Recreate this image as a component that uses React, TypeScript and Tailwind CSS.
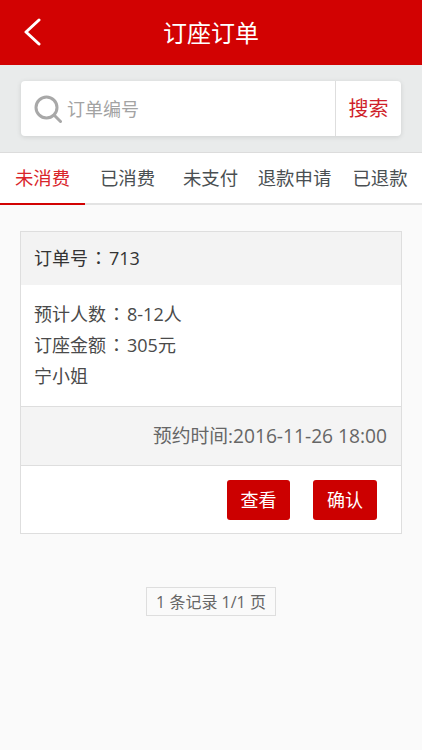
const FONT = "font-['Open_Sans','Noto_Sans_CJK_SC',sans-serif]"

const tabs = [
  { label: '未消费', className: 'w-[85px]', active: true },
  { label: '已消费', className: 'w-[85px]' },
  { label: '未支付', className: 'w-[81px]' },
  { label: '退款申请', className: 'w-[87px]' },
  { label: '已退款', className: 'w-[84px]' },
]

// the fullwidth colon sits in the middle of its box in the original
function Colon() {
  return <span className="inline-block h-[18px] w-[21px] text-center align-baseline leading-[18px] font-['Noto_Sans_CJK_TC',sans-serif]">：</span>
}

export default function App() {
  return (
    <div className={`flex h-[750px] w-[422px] flex-col overflow-hidden bg-[#fafafa] ${FONT}`}>
      {/* Top bar */}
      <header className="relative flex h-[65px] shrink-0 items-center justify-center bg-[#d20202]">
        <svg className="absolute left-[23px] top-[18px]" width="20" height="28" viewBox="0 0 20 28" fill="none" stroke="white" strokeWidth="3" strokeLinecap="round" strokeLinejoin="round">
          <path d="M16 2 3 14l13 12" />
        </svg>
        <span className="text-[24px] leading-none text-white">订座订单</span>
      </header>

      {/* Search */}
      <div className="flex h-[88px] shrink-0 items-start border-b border-[#dcdcdc] bg-[#e9ebeb] px-[21px] pt-[16px]">
        <div className="flex h-[55px] w-full items-center rounded-[4px] bg-white shadow-[0_1px_5px_rgba(0,0,0,0.12)]">
          <div className="flex min-w-0 flex-1 items-center pl-[13px]">
            <svg width="28" height="28" viewBox="0 0 28 28" fill="none" stroke="#a8a8a8" strokeWidth="3" strokeLinecap="round">
              <circle cx="12.5" cy="12.5" r="10.5" />
              <path d="m20.5 20.5 6 6" />
            </svg>
            <span className="ml-[5px] text-[18px] leading-none text-[#a3a3a3]">订单编号</span>
          </div>
          <div className="flex h-full w-[66px] items-center justify-center border-l border-[#dedede]">
            <span className="text-[20px] leading-none text-[#cf1f2a]">搜索</span>
          </div>
        </div>
      </div>

      {/* Tabs */}
      <nav className="flex h-[52px] shrink-0 border-b-2 border-[#e3e3e3] bg-white">
        {tabs.map((tab) => (
          <div
            key={tab.label}
            className={`-mb-[2px] flex h-[52px] items-center justify-center whitespace-nowrap border-b-2 text-[18.4px] leading-none ${tab.className} ${
              tab.active ? 'border-[#d20202] text-[#d9252b]' : 'border-transparent text-[#4a4f52]'
            }`}
          >
            {tab.label}
          </div>
        ))}
      </nav>

      {/* Order card */}
      <section className="mx-[20px] mt-[26px] border border-[#dedede] bg-white">
        <div className="flex h-[53px] items-center bg-[#f3f3f3] pb-[2px] pl-[13px] text-[18px] leading-none text-[#333333]">
          <span>订单号<Colon />713</span>
        </div>
        <div className="flex h-[121px] flex-col justify-center pl-[13px] text-[18px] text-[#4a4a4a]">
          <p className="h-[31px] leading-[31px]">预计人数<Colon />8-12人</p>
          <p className="h-[31px] leading-[31px]">订座金额<Colon />305元</p>
          <p className="h-[31px] leading-[31px]">宁小姐</p>
        </div>
        <div className="flex h-[60px] items-center justify-end border-y border-[#dedede] bg-[#f4f4f4] pr-[14px] text-[18.8px] leading-none text-[#666666]">
          <span>预约时间:<span className="text-[19.2px]">2016-11-26 18:00</span></span>
        </div>
        <div className="flex h-[67px] items-center justify-end pr-[24px]">
          <button className="flex h-[40px] w-[63px] items-center justify-center rounded-[3px] bg-[#cc0000] text-[18px] leading-none text-white">查看</button>
          <button className="ml-[23px] flex h-[40px] w-[64px] items-center justify-center rounded-[3px] bg-[#cc0000] text-[18px] leading-none text-white">确认</button>
        </div>
      </section>

      {/* Pager */}
      <div className="mt-[53px] flex justify-center">
        <span className="flex h-[29px] w-[130px] items-center justify-center border border-[#dedede] text-[16px] leading-none text-[#666666]">
          1 条记录 1/1 页
        </span>
      </div>
    </div>
  )
}
